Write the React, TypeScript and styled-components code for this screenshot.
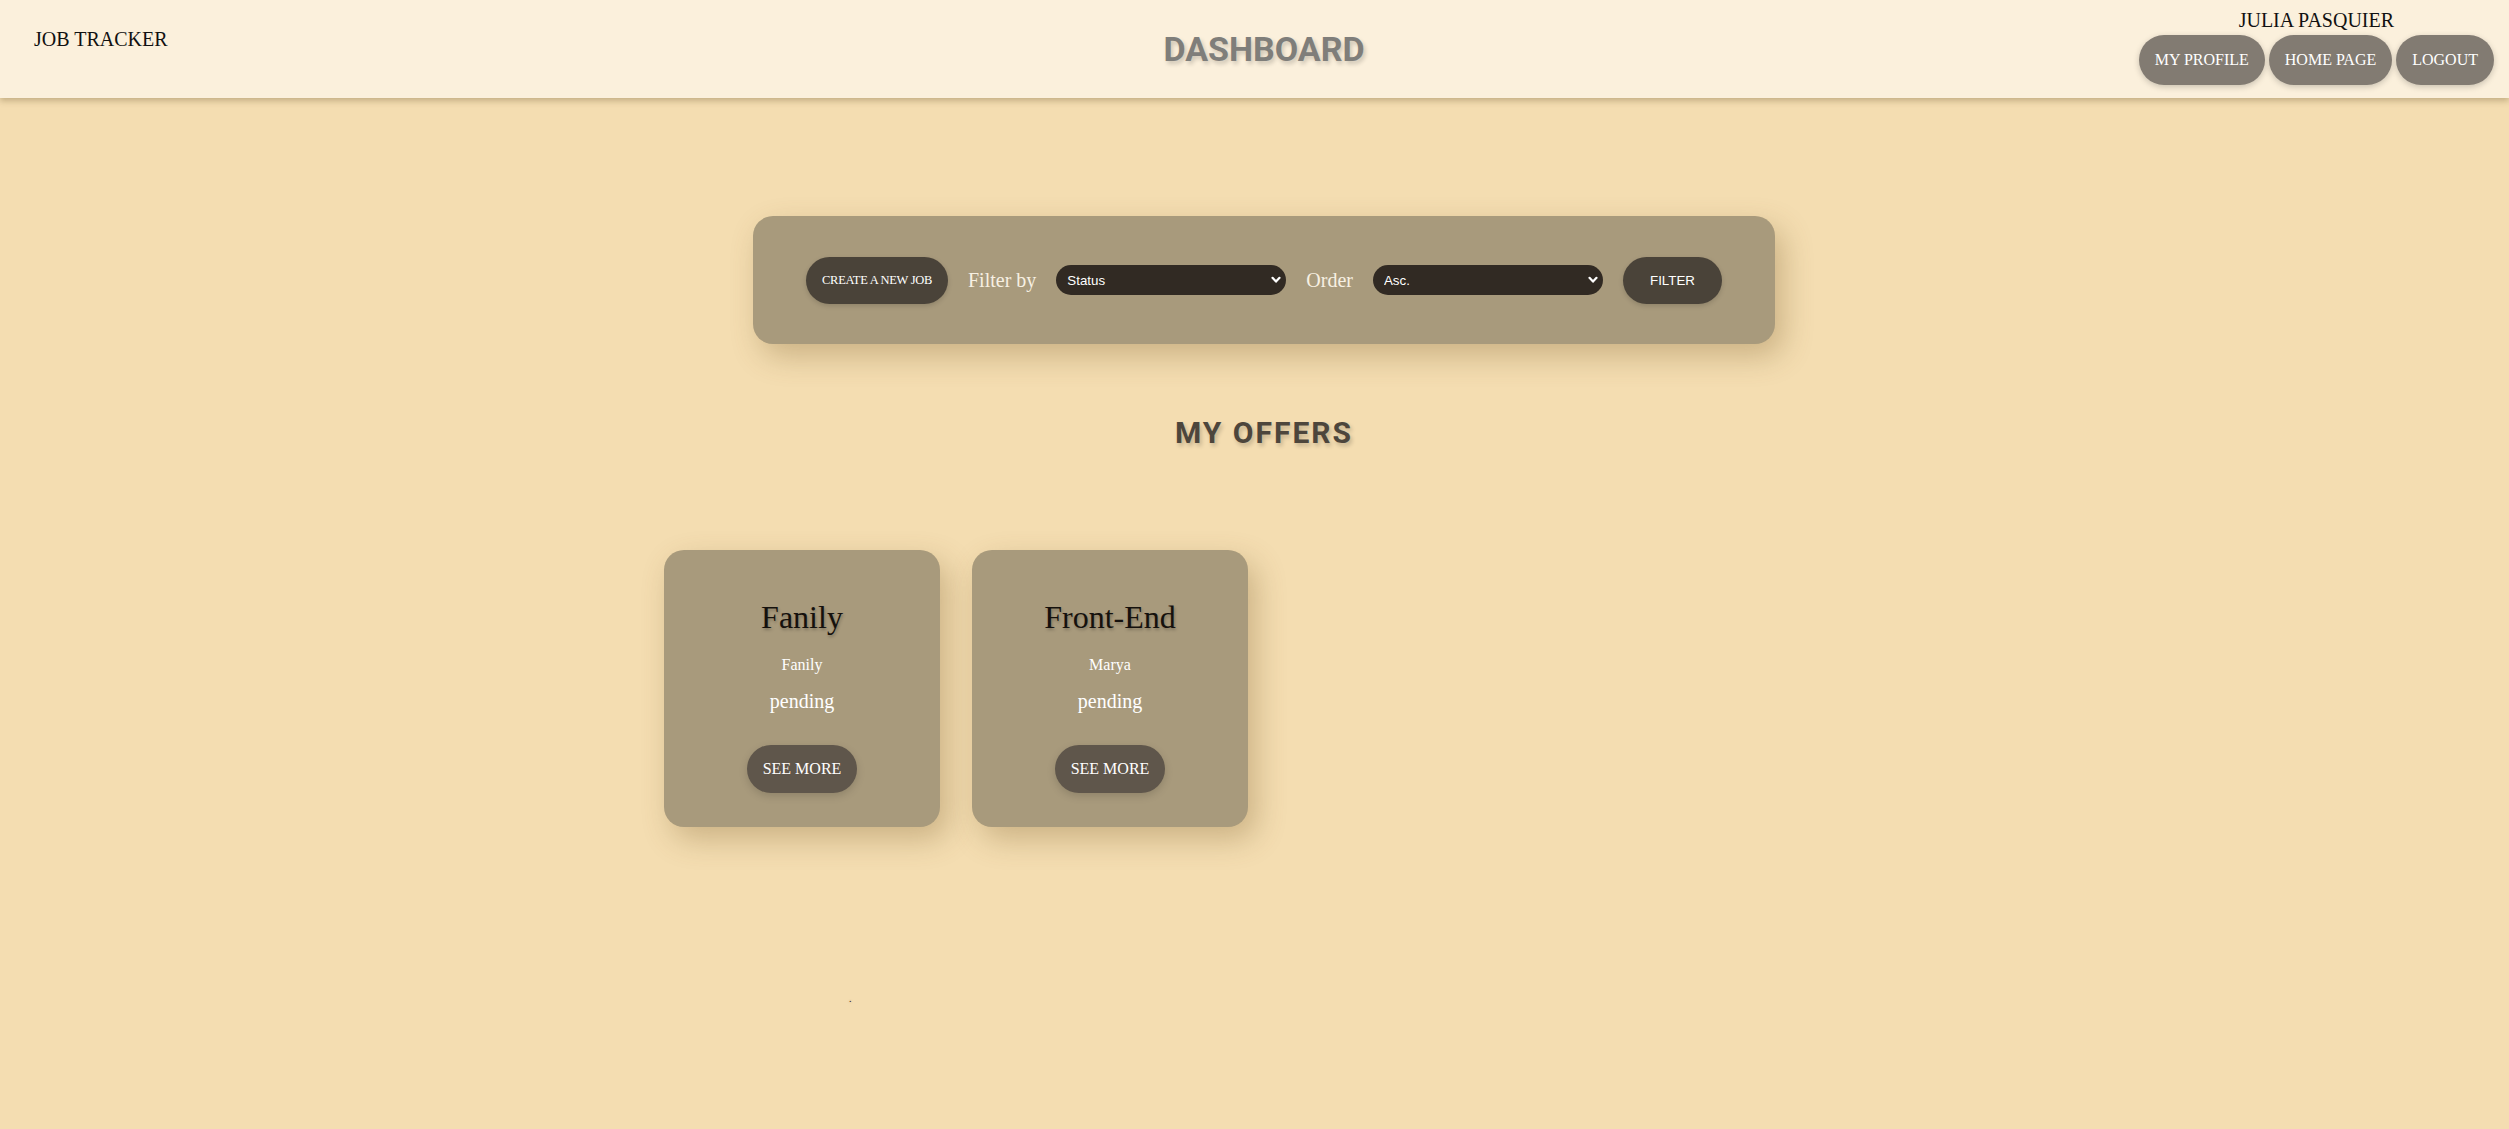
import React from 'react';
import styled, { createGlobalStyle } from 'styled-components';

const GlobalStyle = createGlobalStyle`
  body {
    margin: 0;
    background-color: #F4DDB1;
    font-family: "Liberation Serif", "Times New Roman", serif;
  }
`;

const Header = styled.header`
  display: grid;
  grid-template-columns: 1fr auto 1fr;
  align-items: start;
  height: 98px;
  padding: 0 15px 0 34px;
  background-color: #FBF0DC;
  box-shadow: 0 3px 6px rgba(90, 70, 30, 0.3);
  position: relative;
  z-index: 1;
`;

const Brand = styled.div`
  margin-top: 29px;
  font-size: 20px;
  line-height: 20px;
  color: #111;
`;

const Title = styled.h1`
  margin: 32px 0 0;
  font-family: Roboto, "Liberation Sans", sans-serif;
  font-weight: 700;
  font-size: 34px;
  line-height: 34px;
  color: #7F7E7A;
  text-shadow: 2px 3px 4px rgba(0, 0, 0, 0.18);
`;

const UserBlock = styled.div`
  justify-self: end;
  display: flex;
  flex-direction: column;
  align-items: center;
  margin-top: 10px;
`;

const UserName = styled.div`
  font-size: 20px;
  line-height: 20px;
  color: #111;
  margin-bottom: 5px;
`;

const NavRow = styled.nav`
  display: flex;
  gap: 4px;
`;

const NavButton = styled.button`
  height: 50px;
  padding: 0 16px;
  border: none;
  border-radius: 25px;
  background-color: #827B72;
  color: #fff;
  font-family: "Liberation Serif", serif;
  font-size: 16px;
  box-shadow: 0 2px 6px rgba(0, 0, 0, 0.2);
  cursor: pointer;
`;

const Main = styled.main`
  display: flex;
  flex-direction: column;
  align-items: center;
  padding-left: 19px;
`;

const FilterPanel = styled.section`
  margin-top: 118px;
  height: 128px;
  box-sizing: border-box;
  display: flex;
  align-items: center;
  gap: 20px;
  padding: 0 53px;
  background-color: #A89A7C;
  border-radius: 20px;
  box-shadow: 8px 12px 30px rgba(110, 80, 30, 0.3);
`;

const DarkButton = styled.button<{ $serif?: boolean }>`
  height: 47px;
  padding: 0 ${(p) => (p.$serif ? '16px' : '27px')};
  border: none;
  border-radius: 24px;
  background-color: #4A4339;
  color: #fff;
  font-family: ${(p) => (p.$serif ? '"Liberation Serif", serif' : '"Liberation Sans", Arial, sans-serif')};
  font-size: ${(p) => (p.$serif ? '12.5px' : '13.33px')};
  letter-spacing: ${(p) => (p.$serif ? '-0.3px' : '0')};
  white-space: nowrap;
  box-shadow: 0 2px 5px rgba(0, 0, 0, 0.15);
  cursor: pointer;
`;

const Label = styled.label`
  font-size: 20px;
  color: #F7F0E2;
  white-space: nowrap;
`;

const SelectWrap = styled.div`
  position: relative;
  width: 230px;
  height: 30px;
`;

const Select = styled.select`
  appearance: none;
  width: 100%;
  height: 100%;
  border: none;
  border-radius: 15px;
  background-color: #312A23;
  color: #fff;
  font-family: "Liberation Sans", Arial, sans-serif;
  font-size: 13.33px;
  padding: 0 24px 0 11px;
  outline: none;
`;

const Chevron = styled.svg`
  position: absolute;
  right: 5px;
  top: 11px;
  width: 10px;
  height: 8px;
  pointer-events: none;
`;

const SectionTitle = styled.h2`
  margin: 74px 0 0;
  font-family: Roboto, "Liberation Sans", sans-serif;
  font-weight: 700;
  font-size: 30px;
  line-height: 30px;
  letter-spacing: 2px;
  color: #4D463C;
  text-shadow: 2px 3px 4px rgba(0, 0, 0, 0.2);
`;

const CardGrid = styled.div`
  margin-top: 102px;
  display: grid;
  grid-template-columns: repeat(4, 276px);
  gap: 32px;
`;

const Card = styled.article`
  height: 277px;
  box-sizing: border-box;
  display: flex;
  flex-direction: column;
  align-items: center;
  background-color: #A89A7C;
  border-radius: 20px;
  box-shadow: 8px 12px 30px rgba(110, 80, 30, 0.3);
`;

const CardTitle = styled.h3`
  margin: 51px 0 0;
  font-weight: 400;
  font-size: 32px;
  line-height: 32px;
  color: #15110D;
  text-shadow: 1px 2px 3px rgba(0, 0, 0, 0.25);
`;

const Company = styled.p`
  margin: 24px 0 0;
  font-size: 16px;
  line-height: 16px;
  color: #fff;
`;

const Status = styled.p`
  margin: 18px 0 0;
  font-size: 20px;
  line-height: 20px;
  color: #fff;
`;

const SeeMore = styled.button`
  margin-top: 34px;
  height: 48px;
  padding: 0 16px;
  border: none;
  border-radius: 24px;
  background-color: #5F564B;
  color: #fff;
  font-family: "Liberation Serif", serif;
  font-size: 16px;
  box-shadow: 0 3px 8px rgba(0, 0, 0, 0.15);
  cursor: pointer;
`;

const Footer = styled.div`
  width: 1200px;
  margin-top: 167px;
  padding-left: 185px;
  box-sizing: border-box;
  font-size: 10px;
  line-height: 10px;
  color: #2a2018;
  text-shadow: 0 0 2px rgba(120, 60, 60, 0.5);
`;

const ChevronIcon = () => (
  <Chevron viewBox="0 0 10 8">
    <path d="M1.5 1.8 L5 5.6 L8.5 1.8" fill="none" stroke="#fff" strokeWidth="2.2" strokeLinecap="round" strokeLinejoin="round" />
  </Chevron>
);

const offers = [
  { title: 'Fanily', company: 'Fanily', status: 'pending' },
  { title: 'Front-End', company: 'Marya', status: 'pending' },
];

export default function App() {
  return (
    <>
      <GlobalStyle />
      <Header>
        <Brand>JOB TRACKER</Brand>
        <Title>DASHBOARD</Title>
        <UserBlock>
          <UserName>JULIA PASQUIER</UserName>
          <NavRow>
            <NavButton>MY PROFILE</NavButton>
            <NavButton>HOME PAGE</NavButton>
            <NavButton>LOGOUT</NavButton>
          </NavRow>
        </UserBlock>
      </Header>
      <Main>
        <FilterPanel>
          <DarkButton $serif>CREATE A NEW JOB</DarkButton>
          <Label htmlFor="filter">Filter by</Label>
          <SelectWrap>
            <Select id="filter" defaultValue="status">
              <option value="status">Status</option>
              <option value="company">Company</option>
              <option value="date">Date</option>
            </Select>
            <ChevronIcon />
          </SelectWrap>
          <Label htmlFor="order">Order</Label>
          <SelectWrap>
            <Select id="order" defaultValue="asc">
              <option value="asc">Asc.</option>
              <option value="desc">Desc.</option>
            </Select>
            <ChevronIcon />
          </SelectWrap>
          <DarkButton>FILTER</DarkButton>
        </FilterPanel>
        <SectionTitle>MY OFFERS</SectionTitle>
        <CardGrid>
          {offers.map((o) => (
            <Card key={o.title}>
              <CardTitle>{o.title}</CardTitle>
              <Company>{o.company}</Company>
              <Status>{o.status}</Status>
              <SeeMore>SEE MORE</SeeMore>
            </Card>
          ))}
        </CardGrid>
        <Footer>.</Footer>
      </Main>
    </>
  );
}
